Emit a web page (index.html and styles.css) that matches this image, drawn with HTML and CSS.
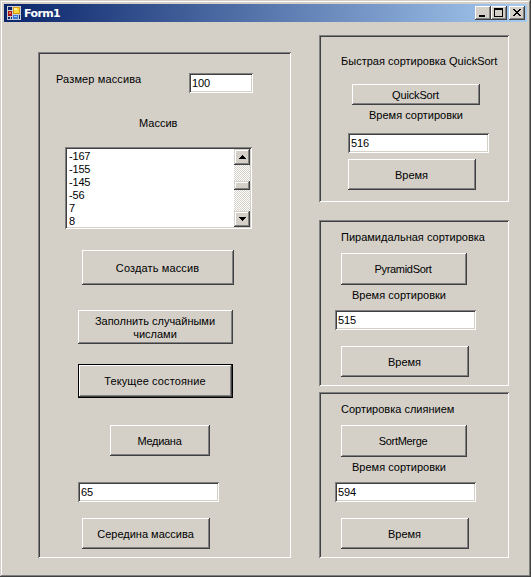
FILE: index.html
```html
<!DOCTYPE html>
<html lang="ru">
<head>
<meta charset="utf-8">
<title>Form1</title>
<link rel="stylesheet" href="styles.css">
</head>
<body>
<div class="window">
  <header class="titlebar">
    <svg class="app-icon" width="14" height="14" viewBox="0 0 14 14" shape-rendering="crispEdges">
      <rect width="14" height="14" fill="#c8ccd4"/>
      <path d="M1 1h4v3H1zM1 11h2v2H1zM4 11h1v2H4zM12 9h1v4h-1z" fill="#0a246a"/>
      <rect x="6" y="1" width="7" height="7" fill="#d89a10"/>
      <rect x="7" y="2" width="5" height="5" fill="#ffd83c"/>
      <rect x="7" y="2" width="3" height="2" fill="#fff2a0"/>
      <rect x="1" y="5" width="4" height="5" fill="#a81414"/>
      <rect x="2" y="6" width="2" height="2" fill="#f07058"/>
      <rect x="6" y="9" width="5" height="4" fill="#3c78d8"/>
      <rect x="7" y="10" width="3" height="1" fill="#a0c8ff"/>
    </svg>
    <h1 class="caption">Form1</h1>
    <div class="controls">
      <button class="ctl" aria-label="Minimize"><svg width="12" height="10" shape-rendering="crispEdges"><path d="M2 7h6v2H2z"/></svg></button>
      <button class="ctl" aria-label="Maximize"><svg width="12" height="10" shape-rendering="crispEdges"><path fill-rule="evenodd" d="M1 0h9v9H1zM2 2v6h7V2z"/></svg></button>
      <button class="ctl close" aria-label="Close"><svg width="12" height="10" shape-rendering="crispEdges"><path d="M2 1h2v1h1v1h2V2h1V1h2v1H9v1H8v1H7v1h1v1h1v1h1v1H8V7H7V6H5v1H4v1H2V7h1V6h1V5h1V4H4V3H3V2H2z"/></svg></button>
    </div>
  </header>
  <main class="form">
    <section class="panel array">
      <div class="size-row">
        <label class="loose">Размер массива</label>
        <input class="field size" value="100">
      </div>
      <label class="array-label">Массив</label>
      <div class="listbox">
        <ul class="items"><li>-167</li><li>-155</li><li>-145</li><li>-56</li><li>7</li><li>8</li></ul>
        <div class="scrollbar">
          <div class="sb up"><svg width="7" height="4" shape-rendering="crispEdges"><path d="M3 0h1v1h1v1h1v1h1v1H0V3h1V2h1V1h1z"/></svg></div>
          <div class="sb thumb"></div>
          <div class="sb down"><svg width="7" height="4" shape-rendering="crispEdges"><path d="M0 0h7v1H6v1H5v1H4v1H3V3H2V2H1V1H0z"/></svg></div>
        </div>
      </div>
      <button class="btn create loose"><span>Создать массив</span></button>
      <button class="btn fill"><span>Заполнить случайными<br>числами</span></button>
      <button class="btn current loose"><span>Текущее состояние</span></button>
      <button class="btn median"><span>Медиана</span></button>
      <input class="field result" value="65">
      <button class="btn middle"><span>Середина массива</span></button>
    </section>
    <div class="sorts">
      <section class="panel quick">
        <label>Быстрая сортировка QuickSort</label>
        <button class="btn run"><span>QuickSort</span></button>
        <label class="time-label">Время сортировки</label>
        <input class="field" value="516">
        <button class="btn time"><span>Время</span></button>
      </section>
      <section class="panel tree">
        <label>Пирамидальная сортировка</label>
        <button class="btn run"><span>PyramidSort</span></button>
        <label class="time-label">Время сортировки</label>
        <input class="field" value="515">
        <button class="btn time"><span>Время</span></button>
      </section>
      <section class="panel tree merge">
        <label>Сортировка слиянием</label>
        <button class="btn run"><span>SortMerge</span></button>
        <label class="time-label">Время сортировки</label>
        <input class="field" value="594">
        <button class="btn time"><span>Время</span></button>
      </section>
    </div>
  </main>
</div>
</body>
</html>
```

FILE: styles.css
```css
* { box-sizing: border-box; }
body {
  margin: 0;
  font: 11px/13px "Liberation Sans", sans-serif;
  color: #000;
}
.window {
  width: 531px;
  height: 577px;
  padding: 4px;
  background: #d4d0c8;
  box-shadow: inset -1px -1px #404040, inset 1px 1px #d4d0c8, inset -2px -2px #808080, inset 2px 2px #fff;
  overflow: hidden;
}
.titlebar {
  display: flex;
  align-items: center;
  height: 18px;
  padding: 0 2px 0 3px;
  background: linear-gradient(to right, #0a246a, #a6caf0);
}
.caption {
  margin: 0 0 0 3px;
  padding-top: 1px;
  font: bold 11px/17px "DejaVu Sans", sans-serif;
  letter-spacing: -0.6px;
  color: #fff;
}
.controls { display: flex; margin-left: auto; }
.ctl, .btn, .sb {
  margin: 0;
  padding: 0;
  border: 0;
  background: #d4d0c8;
  box-shadow: inset -1px -1px #404040, inset 1px 1px #fff, inset -2px -2px #808080;
}
.ctl { display: block; width: 16px; height: 14px; }
.ctl svg { display: block; margin: -1px 0 0 2px; }
.close { margin-left: 2px; }

.form { display: flex; align-items: flex-start; gap: 28px; padding: 13px 0 0 34px; }
.panel {
  display: flex;
  flex-direction: column;
  align-items: flex-start;
  box-shadow: inset 1px 1px #808080, inset -1px -1px #fff, inset 2px 2px #404040;
}
label { display: block; white-space: nowrap; }
.btn {
  display: flex;
  align-items: center;
  justify-content: center;
  padding: 2px 1px 0 0;
  font: inherit;
  white-space: nowrap;
}
.loose { letter-spacing: 0.13px; }
.field {
  display: block;
  width: 141px;
  height: 20px;
  margin: 0;
  padding: 0 3px 1px;
  border: 0;
  outline: 0;
  border-radius: 0;
  background: #fff;
  font: inherit;
  letter-spacing: -0.1px;
  box-shadow: inset 1px 1px #808080, inset -1px -1px #fff, inset 2px 2px #404040, inset -2px -2px #d4d0c8;
}

.array { width: 253px; height: 506px; margin-top: 17px; padding-top: 21px; }
.size-row { display: flex; justify-content: space-between; width: 215px; padding-left: 18px; }
.size { width: 64px; }
.array-label { margin: 24px 0 0 101px; }
.listbox {
  display: flex;
  width: 187px;
  height: 82px;
  margin: 17px 0 0 27px;
  padding: 2px;
  background: #fff;
  box-shadow: inset 1px 1px #808080, inset -1px -1px #fff, inset 2px 2px #404040, inset -2px -2px #d4d0c8;
}
.items { flex: 1; margin: 0; padding: 1px 0 0 2px; list-style: none; letter-spacing: -0.2px; }
.scrollbar {
  display: flex;
  flex-direction: column;
  width: 16px;
  background: repeating-conic-gradient(#d4d0c8 0 25%, #fff 0 50%) 0 0 / 2px 2px;
}
.sb { display: flex; align-items: center; justify-content: center; height: 16px; box-shadow: inset -1px -1px #404040, inset 1px 1px #d4d0c8, inset -2px -2px #808080, inset 2px 2px #fff; }
.thumb { height: 9px; margin-top: 16px; }
.down { margin-top: auto; }

.create { width: 152px; height: 35px; margin: 21px 0 0 44px; }
.fill { width: 155px; height: 34px; margin: 25px 0 0 40px; }
.current {
  width: 155px;
  height: 34px;
  margin: 20px 0 0 40px;
  padding-top: 0;
  box-shadow: inset 0 0 0 1px #000, inset -2px -2px #404040, inset 2px 2px #fff, inset -3px -3px #808080;
}
.median { width: 100px; height: 31px; margin: 27px 0 0 72px; letter-spacing: -0.3px; }
.result { margin: 26px 0 0 40px; }
.middle { width: 128px; height: 31px; margin: 16px 0 0 44px; }

.quick { width: 190px; height: 167px; padding: 20px 0 0 22px; }
.quick .run { width: 128px; height: 21px; margin: 16px 0 0 11px; letter-spacing: -0.15px; }
.quick .time-label { margin: 4px 0 0 28px; }
.quick .field { margin: 11px 0 0 7px; }
.quick .time { margin: 6px 0 0 7px; }
.time { width: 128px; height: 31px; }
.run { letter-spacing: -0.3px; }

.tree { width: 190px; height: 166px; margin-top: 18px; padding: 11px 0 0 22px; }
.tree .run { width: 126px; height: 32px; margin-top: 9px; padding: 0 2px 0 0; }
.tree .time-label { margin: 4px 0 0 11px; }
.tree .field { margin: 8px 0 0 -6px; }
.tree .time { margin-top: 16px; }
.merge { margin-top: 6px; }
```
